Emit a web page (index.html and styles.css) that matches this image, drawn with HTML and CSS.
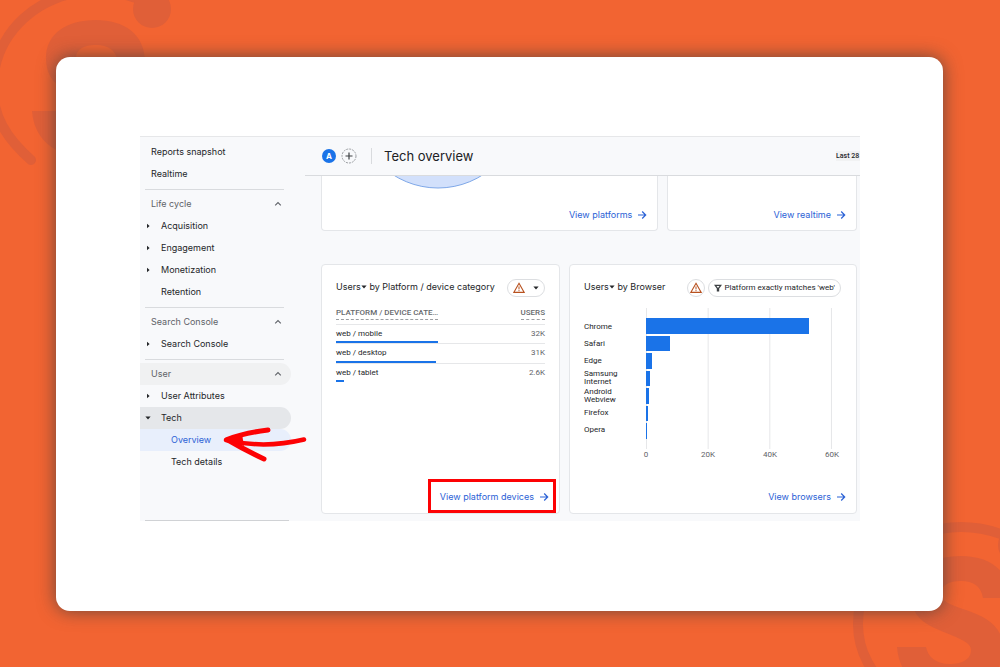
FILE: index.html
```html
<!DOCTYPE html>
<html lang="en">
<head>
<meta charset="utf-8">
<meta name="viewport" content="width=device-width, initial-scale=1">
<title>Tech overview</title>
<link rel="stylesheet" href="styles.css">
</head>
<body>
<svg width="0" height="0" class="defs" aria-hidden="true">
  <symbol id="brand" viewBox="-115 -115 230 230">
    <path d="M-65 66C-90 44-103 22-103-6C-103-62-56-103 0-103C18-103 34-99 50-92" fill="none" stroke="#e05f38" stroke-width="10" stroke-linecap="round"/>
    <circle cx="56" cy="-85" r="19" fill="#e05f38"/>
    <path fill="#e05f38" d="M22-32H49C49-60 28-74 0-74C-30-74-50-60-50-36C-50-10-32-4-10 5C4 11 10 14 10 20C10 30 0 34-11 34C-25 34-33 27-35 17H-64C-62 45-42 62-11 62C20 62 42 46 42 18C42-4 25-13 5-20C-12-26-20-29-20-36C-20-45-12-49 0-49C12-49 20-44 22-32Z"/>
  </symbol>
  <symbol id="go" viewBox="0 0 10 10"><path d="M1 5H8.6M5.2 1.5L8.7 5L5.2 8.5" fill="none" stroke="currentColor" stroke-width="1.2"/></symbol>
  <symbol id="up" viewBox="0 0 8 8"><path d="M1.2 5.4L4 2.6L6.8 5.4" fill="none" stroke="currentColor" stroke-width="1.1"/></symbol>
  <symbol id="right" viewBox="0 0 6 6"><path d="M2 .8L4.6 3L2 5.2Z" fill="currentColor"/></symbol>
  <symbol id="down" viewBox="0 0 6 6"><path d="M.4 1.6H5.6L3 4.4Z" fill="currentColor"/></symbol>
  <symbol id="warn" viewBox="0 0 12 12"><path d="M6 1.3L11.2 10.4H.8Z" fill="none" stroke="#b8511f" stroke-width="1.1"/><path d="M6 4.4V7.4M6 8.1V9.2" stroke="#b8511f" stroke-width="1"/></symbol>
</svg>
<div class="backdrop" aria-hidden="true">
  <svg class="brand brand-top"><use href="#brand"/></svg>
  <svg class="brand brand-bottom"><use href="#brand"/></svg>
</div>
<main class="sheet">
  <div class="app">
    <nav class="side">
      <a class="item" href="#">Reports snapshot</a>
      <a class="item" href="#">Realtime</a>
      <hr class="rule">
      <button class="item group">Life cycle<svg class="ico8"><use href="#up"/></svg></button>
      <button class="item sub"><svg class="ico6"><use href="#right"/></svg>Acquisition</button>
      <button class="item sub"><svg class="ico6"><use href="#right"/></svg>Engagement</button>
      <button class="item sub"><svg class="ico6"><use href="#right"/></svg>Monetization</button>
      <a class="item leaf" href="#">Retention</a>
      <hr class="rule">
      <button class="item group">Search Console<svg class="ico8"><use href="#up"/></svg></button>
      <button class="item sub"><svg class="ico6"><use href="#right"/></svg>Search Console</button>
      <hr class="rule">
      <button class="item group open">User<svg class="ico8"><use href="#up"/></svg></button>
      <button class="item sub"><svg class="ico6"><use href="#right"/></svg>User Attributes</button>
      <button class="item sub active"><svg class="ico6"><use href="#down"/></svg>Tech</button>
      <div class="pointed">
        <a class="item deep current" href="#">Overview</a>
        <svg class="pointer" viewBox="0 0 86 36" aria-hidden="true"><g fill="none" stroke="#fd0204" stroke-linecap="round" stroke-linejoin="round"><path d="M4 14Q42 23 82 13.500" stroke-width="4.500"/><path d="M46 4Q22 7 5 13.500Q21 23 42 33" stroke-width="5"/></g><path d="M2 13L20 8L22 20Z" fill="#fd0204"/></svg>
      </div>
      <a class="item deep" href="#">Tech details</a>
      <hr class="last">
    </nav>
    <section class="content">
      <header class="top">
        <span class="avatar">A</span>
        <button class="add" aria-label="Add comparison"><svg viewBox="0 0 16 16"><circle cx="8" cy="8" r="7" fill="none" stroke="#9b9ea2" stroke-dasharray="2 1"/><path d="M8 4.500V11.500M4.500 8H11.500" stroke="#3c4043" stroke-width="1.200"/></svg></button>
        <h1 class="title">Tech overview</h1>
        <span class="range">Last 28</span>
      </header>
      <div class="row first">
        <article class="card cut">
          <svg class="pie" viewBox="0 0 90 14" aria-hidden="true"><circle cx="45" cy="-71" r="83" fill="#d2e0fb" stroke="#7fa8e8"/></svg>
          <a class="more" href="#">View platforms<svg class="ico10"><use href="#go"/></svg></a>
        </article>
        <article class="card cut">
          <a class="more" href="#">View realtime<svg class="ico10"><use href="#go"/></svg></a>
        </article>
      </div>
      <div class="row second">
        <article class="card">
          <div class="head">
            <h2 class="name">Users<svg class="ico6"><use href="#down"/></svg> by Platform / device category</h2>
            <button class="pill pick" aria-label="Data warnings"><svg class="ico12"><use href="#warn"/></svg><svg class="ico6"><use href="#down"/></svg></button>
          </div>
          <table class="table">
            <thead><tr><th><span>PLATFORM / DEVICE CATE…</span></th><th class="num"><span>USERS</span></th></tr></thead>
            <tbody>
              <tr><td>web / mobile</td><td class="num">32K</td></tr>
              <tr class="meter"><td colspan="2"><div style="width:49%"></div></td></tr>
              <tr><td>web / desktop</td><td class="num">31K</td></tr>
              <tr class="meter"><td colspan="2"><div style="width:48%"></div></td></tr>
              <tr><td>web / tablet</td><td class="num">2.6K</td></tr>
              <tr class="meter end"><td colspan="2"><div style="width:4%"></div></td></tr>
            </tbody>
          </table>
          <a class="more marked" href="#">View platform devices<svg class="ico10"><use href="#go"/></svg></a>
        </article>
        <article class="card">
          <div class="head">
            <h2 class="name">Users<svg class="ico6"><use href="#down"/></svg> by Browser</h2>
            <div class="tools">
              <button class="pill round" aria-label="Data warning"><svg class="ico12"><use href="#warn"/></svg></button>
              <button class="pill filter"><svg class="ico8" viewBox="0 0 8 8"><path d="M1.200 1.300H6.800L4.600 4.300V7H3.400V4.300Z" fill="none" stroke="#3c4043" stroke-width="1.200"/></svg>Platform exactly matches 'web'</button>
            </div>
          </div>
          <div class="chart">
            <div class="labels"><span>Chrome</span><span>Safari</span><span>Edge</span><span>Samsung Internet</span><span>Android Webview</span><span>Firefox</span><span>Opera</span></div>
            <div class="plot">
              <div class="bar" style="width:88%"></div>
              <div class="bar" style="width:13%"></div>
              <div class="bar" style="width:3%"></div>
              <div class="bar" style="width:2.400%"></div>
              <div class="bar" style="width:1.400%"></div>
              <div class="bar" style="width:1.200%"></div>
              <div class="bar" style="width:.5%"></div>
            </div>
            <div class="axis"><span>0</span><span>20K</span><span>40K</span><span>60K</span></div>
          </div>
          <a class="more" href="#">View browsers<svg class="ico10"><use href="#go"/></svg></a>
        </article>
      </div>
    </section>
  </div>
</main>
</body>
</html>
```

FILE: styles.css
```css
* { box-sizing: border-box; }
body {
  margin: 0;
  min-height: 100vh;
  padding: 57px 57px 56px 56px;
  display: flex;
  position: relative;
  background: #f26432;
  color: #242629;
  font: 9px/12px "Inter", "Liberation Sans", sans-serif;
}
button { font: inherit; color: inherit; background: none; border: 0; padding: 0; text-align: left; cursor: pointer; }
a { color: inherit; text-decoration: none; }
svg { flex: none; display: block; }
.defs { position: absolute; }
.ico6 { width: 6px; height: 6px; }
.ico8 { width: 8px; height: 8px; }
.ico10 { width: 10px; height: 10px; }
.ico12 { width: 12px; height: 12px; }

.backdrop { position: absolute; inset: 0; overflow: hidden; }
.brand { position: absolute; width: 230px; height: 230px; }
.brand-top { left: -19px; top: -21px; }
.brand-bottom { right: -76px; bottom: -78px; }

.sheet {
  position: relative;
  flex: 1;
  min-width: 0;
  padding: 79px 83px 90px 84px;
  background: #fff;
  border-radius: 14px;
  box-shadow: 0 0 18px rgba(60, 60, 60, .75);
}
.app {
  display: grid;
  grid-template-columns: 165px 1fr;
  background: #f8f9fb;
  border-top: 1px solid #e6e7e9;
  overflow: hidden;
}

.side { display: flex; flex-direction: column; padding-top: 4px; }
.item { display: flex; align-items: center; height: 22px; margin-right: 14px; padding-left: 11px; }
.group { justify-content: space-between; padding-right: 9px; color: #5f6368; border-radius: 0 11px 11px 0; }
.open { background: #f0f1f2; }
.sub { gap: 10px; padding-left: 5px; border-radius: 0 11px 11px 0; }
.leaf { padding-left: 21px; }
.deep { padding-left: 31px; }
.active { background: #e5e7ea; }
.current { background: #e8effc; color: #2b62d6; border-radius: 0 11px 11px 0; }
.rule { width: 139px; height: 1px; margin: 4px 0 3px 5px; border: 0; background: #d9dbde; }
.last { width: 144px; height: 1px; margin: auto 0 0 5px; border: 0; background: #d0d2d5; }
.pointed { position: relative; }
.pointer { position: absolute; left: 82px; top: -3px; width: 86px; height: 36px; z-index: 2; }

.content { min-width: 0; padding-bottom: 7px; }
.top {
  display: flex;
  align-items: center;
  height: 39px;
  padding-left: 17px;
  border-bottom: 1px solid #d9dbde;
  overflow: hidden;
}
.avatar { width: 14px; height: 14px; border-radius: 50%; background: #1a73e8; color: #fff; font-size: 8px; font-weight: 700; line-height: 14px; text-align: center; }
.add { margin-left: 5px; }
.add svg { width: 16px; height: 16px; }
.title { flex: 1; margin: 0 0 0 14px; padding-left: 12px; border-left: 1px solid #d9dbde; font: 400 13px/16px "Inter", sans-serif; color: #202124; }
.range { width: 24px; white-space: nowrap; font: 500 7px/10px "Roboto", sans-serif; background: #f1f2f3; }

.row { display: grid; padding: 0 3px 0 16px; }
.first { grid-template-columns: 338fr 190fr; gap: 9px; }
.second { grid-template-columns: 239fr 288fr; gap: 9px; margin-top: 33px; }
.card { display: flex; flex-direction: column; min-width: 0; background: #fff; border: 1px solid #e4e6e9; border-radius: 4px; padding: 14px 14px 10px; }
.second .card { height: 250px; }
.cut { height: 55px; padding: 0 10px 9px; border-top: 0; border-radius: 0 0 4px 4px; }
.pie { width: 90px; height: 14px; margin-left: 61px; }
.more { display: flex; align-items: center; align-self: flex-end; gap: 5px; margin-top: auto; color: #2b62d6; white-space: nowrap; }
.second .card + .card { padding-right: 10px; }
.marked { position: relative; margin-right: -4px; }
.marked::after { content: ""; position: absolute; inset: -12px -7px -10px -12px; border: 3px solid #fd0204; }

.head { display: flex; justify-content: space-between; align-items: flex-start; height: 29px; }
.name { display: flex; align-items: center; margin: 1px 0 0; font-size: 9px; line-height: 13px; font-weight: 400; white-space: pre; }
.pill { display: flex; align-items: center; justify-content: center; height: 18px; border: 1px solid #dcdee1; border-radius: 9px; }
.pick { width: 38px; gap: 8px; }
.tools { display: flex; gap: 3px; margin-right: 5px; }
.round { width: 18px; }
.filter { gap: 2px; padding: 0 5px; font: 400 8px/10px "Roboto", sans-serif; white-space: nowrap; }

.table { width: 100%; border-collapse: collapse; font: 400 8px/10px "Roboto", sans-serif; }
.table td, .table th { padding: 0; text-align: left; }
.table th { height: 16px; vertical-align: top; font-weight: 500; color: #66696d; border-bottom: 1px solid #e6e7e9; }
.table th span { display: inline-block; height: 12px; border-bottom: 1px dashed #9b9ea2; white-space: nowrap; }
.table td { height: 17px; padding-top: 2px; }
.table .num { text-align: right; }
.table td.num { color: #5f6368; }
.table .meter td { height: 2px; padding: 0; border-bottom: 1px solid #e6e7e9; }
.table .meter.end td { border: 0; }
.meter div { height: 2px; background: #1a73e8; }

.chart { display: grid; grid-template-columns: 62px 1fr; font: 400 8px/8px "Roboto", sans-serif; }
.labels, .plot { display: grid; grid-template-rows: repeat(7, 1fr); height: 141px; padding: 10px 0; }
.labels span { align-self: center; width: 40px; }
.plot {
  row-gap: 2px;
  margin-right: 14px;
  border-right: 1px solid #e6e7e9;
  background: linear-gradient(to right, #e6e7e9 1px, transparent 1px) 0 0 / 33.33% 100%;
}
.bar { background: #1a73e8; }
.axis { grid-column: 2; display: flex; justify-content: space-between; margin: 2px 3px 0 -11px; color: #5f6368; }
.axis span { width: 22px; text-align: center; }
```
